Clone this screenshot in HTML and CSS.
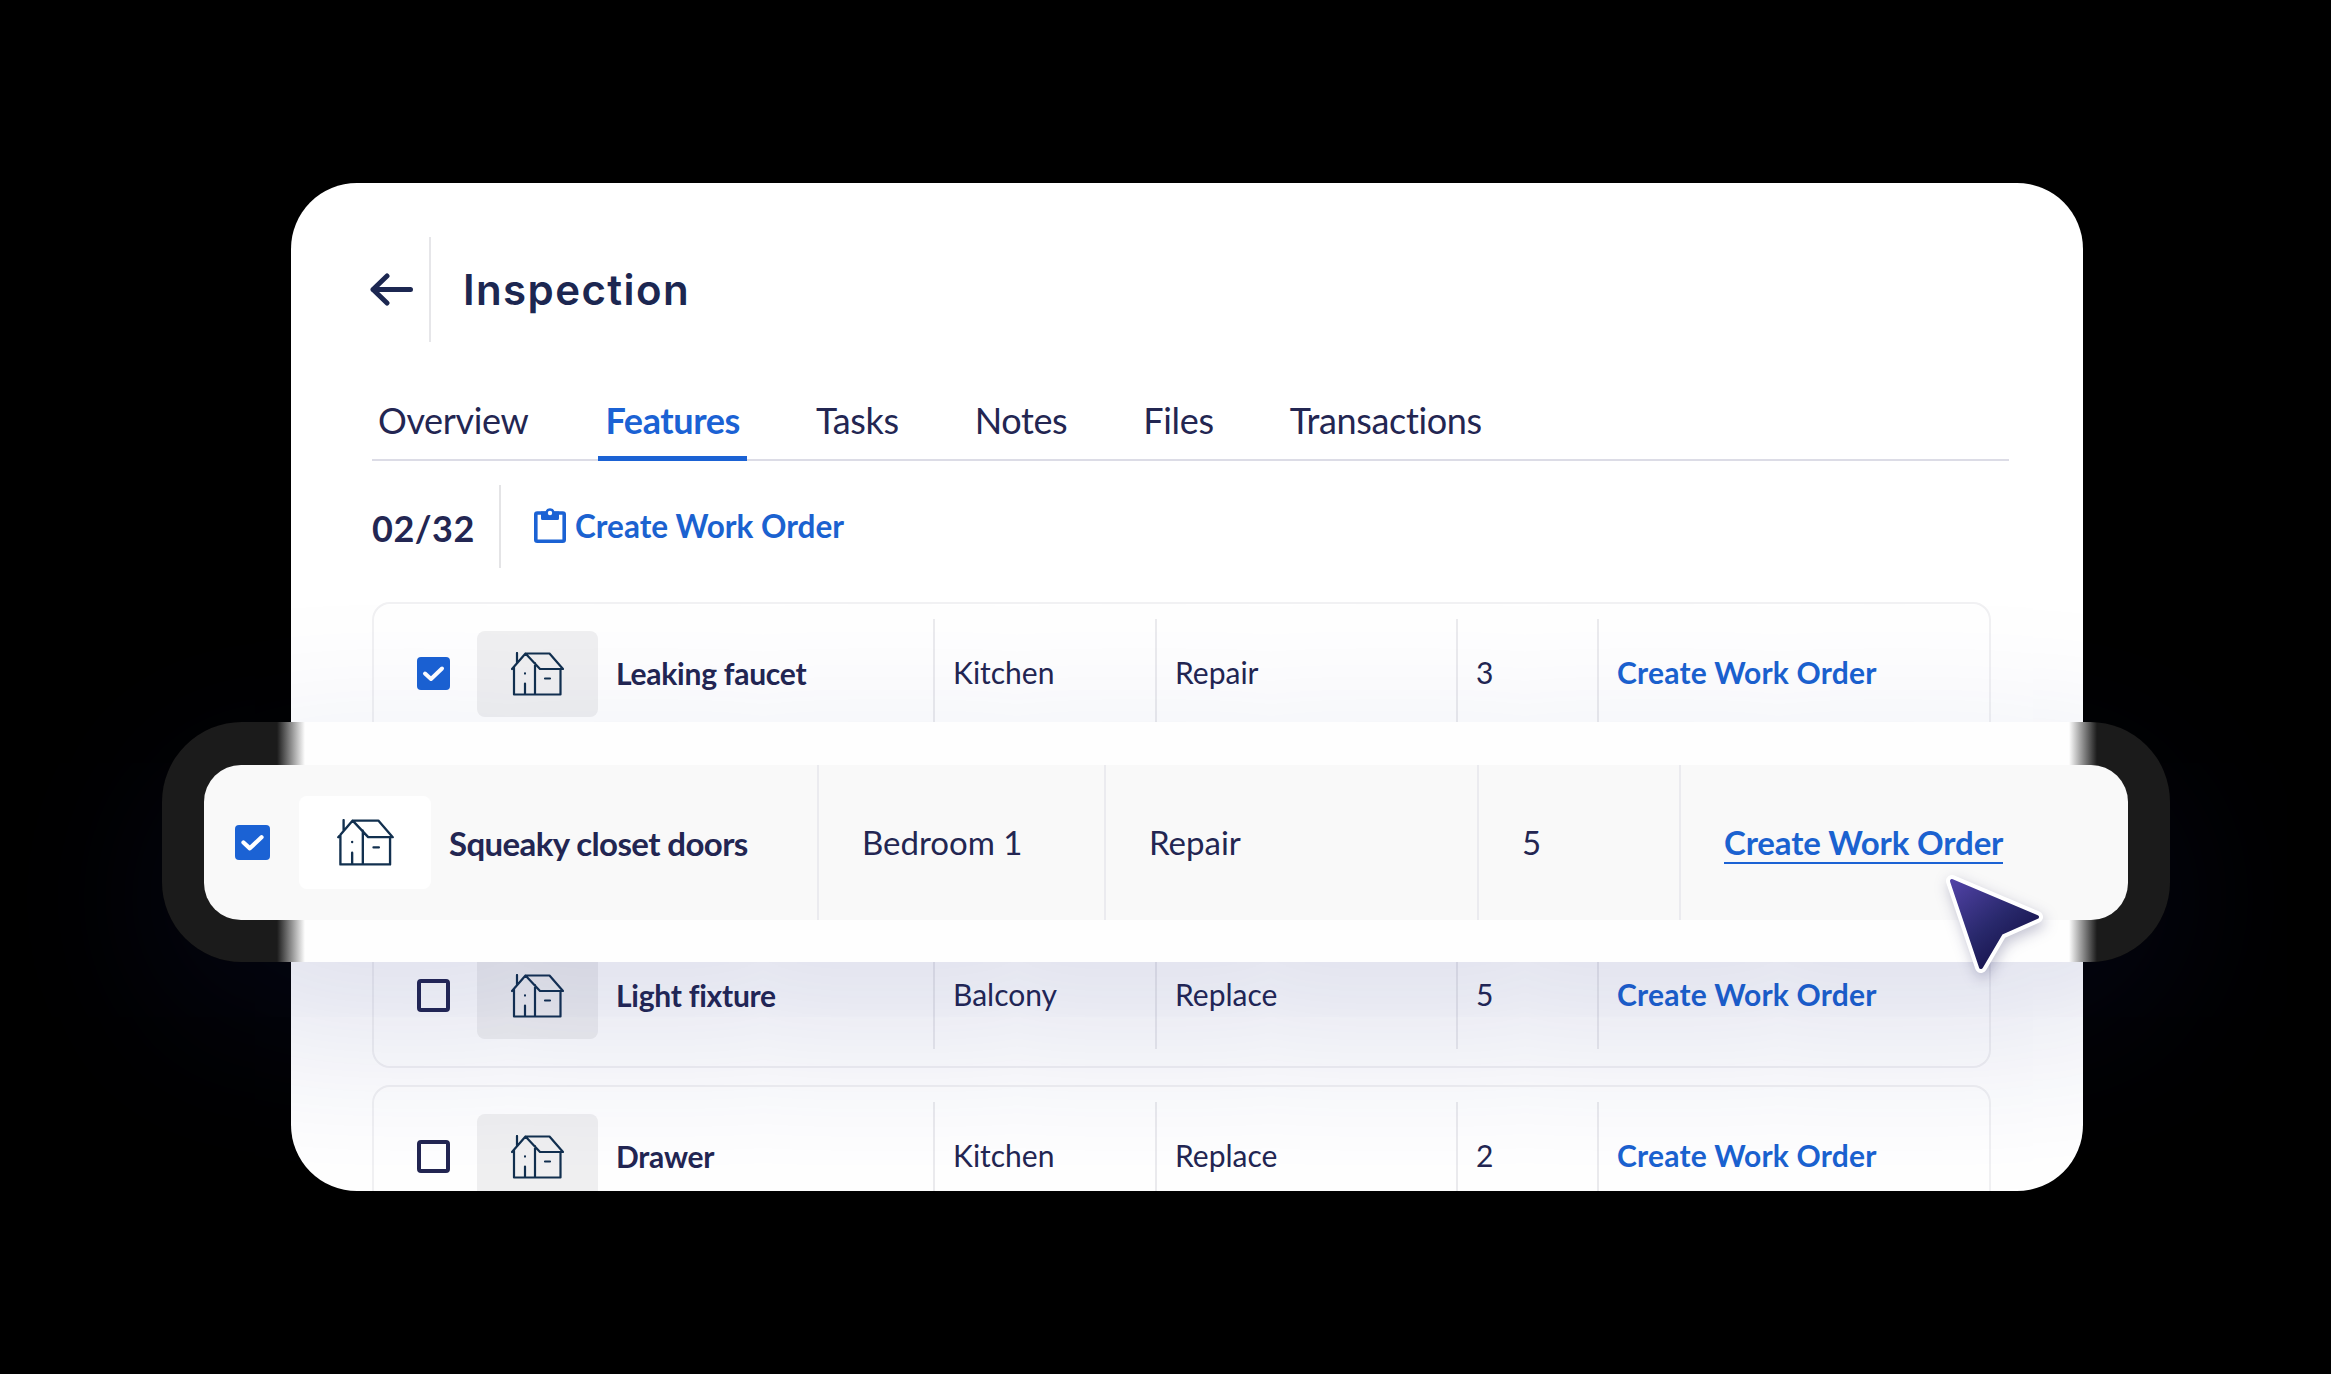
FILE: index.html
```
<!DOCTYPE html>
<html lang="en">
    <head>
        <meta charset="utf-8">
        <title>Inspection</title>
        <link rel="stylesheet" href="styles.css">
    </head>
    <body>
        <!-- shared icons -->
        <svg class="defs" width="0" height="0">
            <symbol id="house" viewBox="0 0 53 44">
                <path d="M6 1V11M1 17L14.500 1.500H38.500L52 17H29L14.500 1.500M3 15V42.500H49.500V17M24 11V42.500M14 31.500V42M14 21.400V21.600M34 26.500H39" />
            </symbol>
            <symbol id="tick" viewBox="0 0 33 33">
                <path d="M8 16.500L14 22L25 11.500" />
            </symbol>
        </svg>

        <div class="card">
            <div class="header">
                <svg class="back" viewBox="0 0 43 33">
                    <path d="M40.500 16.500H3M17 3L3 16.500L17 30" />
                </svg>
                <h1>Inspection</h1>
            </div>

            <div class="tabs">
                <span class="tab">Overview</span>
                <span class="tab active">Features</span>
                <span class="tab">Tasks</span>
                <span class="tab">Notes</span>
                <span class="tab">Files</span>
                <span class="tab">Transactions</span>
            </div>

            <div class="toolbar">
                <span class="count">02/32</span>
                <a class="create">
                    <svg class="clipboard" viewBox="0 0 32 35">
                        <rect x="1.800" y="5" width="28.400" height="28.200" rx="1.500" fill="none" stroke="#1b62d4" stroke-width="3.600" />
                        <path d="M7 3.500H11.500A4.700 4.700 0 0 1 20.500 3.500H25V10.500A1.500 1.500 0 0 1 23.500 12H8.500A1.500 1.500 0 0 1 7 10.500Z" fill="#1b62d4" />
                        <circle cx="16" cy="5" r="2.200" fill="#fff" />
                    </svg>
                    Create Work Order
                </a>
            </div>

            <div class="rows">
                <div class="row">
                    <div class="item">
                        <span class="check on"><svg><use href="#tick" /></svg></span>
                        <span class="thumb"><svg class="house"><use href="#house" /></svg></span>
                        <b>Leaking faucet</b>
                    </div>
                    <div class="cell">Kitchen</div>
                    <div class="cell">Repair</div>
                    <div class="cell">3</div>
                    <div class="cell"><a>Create Work Order</a></div>
                </div>
                <div class="row empty"></div>
                <div class="row">
                    <div class="item">
                        <span class="check"></span>
                        <span class="thumb"><svg class="house"><use href="#house" /></svg></span>
                        <b>Light fixture</b>
                    </div>
                    <div class="cell">Balcony</div>
                    <div class="cell">Replace</div>
                    <div class="cell">5</div>
                    <div class="cell"><a>Create Work Order</a></div>
                </div>
                <div class="row">
                    <div class="item">
                        <span class="check"></span>
                        <span class="thumb"><svg class="house"><use href="#house" /></svg></span>
                        <b>Drawer</b>
                    </div>
                    <div class="cell">Kitchen</div>
                    <div class="cell">Replace</div>
                    <div class="cell">2</div>
                    <div class="cell"><a>Create Work Order</a></div>
                </div>
            </div>
        </div>

        <!-- highlighted row, floats over the list -->
        <div class="band">
            <div class="bigrow">
                <div class="item">
                    <span class="check on"><svg><use href="#tick" /></svg></span>
                    <span class="thumb"><svg class="house"><use href="#house" /></svg></span>
                    <b>Squeaky closet doors</b>
                </div>
                <div class="cell">Bedroom 1</div>
                <div class="cell">Repair</div>
                <div class="cell">5</div>
                <div class="cell"><a>Create Work Order</a></div>
            </div>
        </div>

        <svg class="cursor" viewBox="0 0 130 130">
            <defs>
                <linearGradient id="fill" x1="0" y1="0" x2="0.700" y2="0.900">
                    <stop offset="0" stop-color="#5142a6" />
                    <stop offset="0.600" stop-color="#28286b" />
                    <stop offset="1" stop-color="#17134c" />
                </linearGradient>
            </defs>
            <path class="edge" d="M21 21L106 57L70 73L50 107Z" />
            <path class="arrow" d="M21 21L106 57L70 73L50 107Z" />
        </svg>
    </body>
</html>
```

FILE: styles.css
```
*
{
    box-sizing: border-box;
}
body
{
    margin: 0;
    width: 2331px;
    height: 1374px;
    overflow: hidden;
    position: relative;
    background-color: black;
    color: #232652;
    font-family: Lato, "Liberation Sans", sans-serif;
}
.defs
{
    position: absolute;
}
.card
{
    width: 1792px;
    height: 1008px;
    margin: 183px 0 0 291px;
    padding: 54px 74px 0 80px;
    overflow: hidden;
    border-radius: 66px;
    background-color: white;
}
svg
{
    display: block;
    fill: none;
}
a
{
    color: #1b62d0;
    font-weight: 700;
}

/* header */
.header
{
    display: flex;
    align-items: center;
    height: 105px;
}
.back
{
    width: 43px;
    height: 33px;
    margin-left: -1px;
    stroke: #1c2751;
    stroke-width: 5;
    stroke-linecap: round;
    stroke-linejoin: round;
}
h1
{
    height: 105px;
    margin: 0 0 0 16px;
    padding-left: 32px;
    border-left: 2px solid #e6e6e9;
    line-height: 105px;
    font-family: Inter, "Liberation Sans", sans-serif;
    font-size: 42px;
    font-weight: 600;
    letter-spacing: 1.4px;
    color: #1c2751;
}

/* tabs */
.tabs
{
    display: flex;
    gap: 62px;
    height: 119px;
    margin: 0 0 0 1px;
    border-bottom: 2px solid #dcdce6;
}
.tab
{
    height: 119px;
    padding: 56px 7px 0;
    line-height: 44px;
    font-size: 36px;
    letter-spacing: -0.35px;
}
.tab:first-child
{
    padding: 56px 8px 0 6px;
}
.tab.active
{
    border-bottom: 5px solid #1b62d4;
    color: #1b62d4;
    font-weight: 700;
    letter-spacing: -0.4px;
}

/* count and action */
.toolbar
{
    display: flex;
    align-items: center;
    height: 83px;
    margin: 24px 0 0 1px;
}
.count
{
    width: 127px;
    padding-top: 3px;
    font-size: 36px;
    font-weight: 700;
    letter-spacing: 0.5px;
}
.create
{
    display: flex;
    align-items: center;
    gap: 9px;
    height: 83px;
    padding: 0 0 1px 33px;
    border-left: 2px solid #e4e4e6;
    font-size: 31.5px;
}
.clipboard
{
    width: 32px;
    height: 35px;
    margin-bottom: 1px;
}

/* list */
.rows
{
    display: flex;
    flex-direction: column;
    gap: 17px;
    margin: 34px 0 0 1px;
}
.row
{
    display: grid;
    grid-template-columns: 559px 222px 301px 141px 1fr;
    flex: none;
    width: 1619px;
    height: 144px;
    padding: 15px 0 17px;
    border: 2px solid #f1f1f3;
    border-radius: 18px;
    font-size: 30px;
}
.item, .cell
{
    display: flex;
    align-items: center;
}
.row .cell
{
    padding: 0 0 2px 18px;
    border-left: 2px solid #ebebee;
}
.row a
{
    letter-spacing: 0.2px;
}
.row .item
{
    padding-left: 43px;
}
.row b
{
    letter-spacing: -0.25px;
}
.check
{
    flex: none;
    width: 33px;
    height: 33px;
    border: 4px solid #232652;
    border-radius: 4px;
}
.check.on
{
    border: none;
    background-color: #1b62d4;
}
.check svg
{
    width: 100%;
    height: 100%;
    stroke: white;
    stroke-width: 4;
    stroke-linecap: round;
    stroke-linejoin: round;
}
.thumb
{
    display: flex;
    flex: none;
    align-items: center;
    justify-content: center;
    width: 121px;
    height: 86px;
    margin: 1px 18px 0 27px;
    border-radius: 8px;
    background-color: #f0f0f1;
}
.house
{
    width: 53px;
    height: 44px;
    stroke: #12304f;
    stroke-width: 2.2;
    stroke-linecap: round;
    stroke-linejoin: round;
}

/* highlighted row */
.band
{
    position: absolute;
    top: 722px;
    left: 162px;
    width: 2008px;
    height: 240px;
    padding: 43px 42px 42px;
    border-radius: 80px;
    background: linear-gradient(to right, #1b1b1b 115px, #8c8c8c 129px, #fefefe 143px, #fefefe 1907px, #8c8c8c 1921px, #1b1b1b 1935px);
    box-shadow: 0 56px 180px rgba(28, 40, 125, 0.18);
}
.bigrow
{
    display: grid;
    grid-template-columns: 613px 287px 373px 202px 1fr;
    width: 1924px;
    height: 155px;
    border-radius: 37px;
    background-color: #f9f9f9;
    font-size: 33px;
}
.bigrow .cell
{
    padding: 0 0 2px 43px;
    border-left: 2px solid #ebebef;
}
.bigrow .item
{
    padding-left: 31px;
}
.bigrow b
{
    letter-spacing: -0.6px;
}
.bigrow .check
{
    width: 35px;
    height: 35px;
}
.bigrow .thumb
{
    width: 132px;
    height: 93px;
    margin: 0 18px 0 29px;
    background-color: white;
}
.bigrow .house
{
    width: 57px;
    height: 47px;
}
.bigrow a
{
    margin-top: 2px;
    border-bottom: 2px solid #1b62d4;
    letter-spacing: -0.15px;
}
.cursor
{
    position: absolute;
    top: 860px;
    left: 1931px;
    width: 130px;
    height: 130px;
    filter: drop-shadow(2px 5px 7px rgba(20, 20, 80, 0.25));
}
.edge
{
    stroke: white;
    stroke-width: 12;
    stroke-linejoin: round;
}
.arrow
{
    fill: url(#fill);
    stroke: url(#fill);
    stroke-width: 4;
    stroke-linejoin: round;
}
```
